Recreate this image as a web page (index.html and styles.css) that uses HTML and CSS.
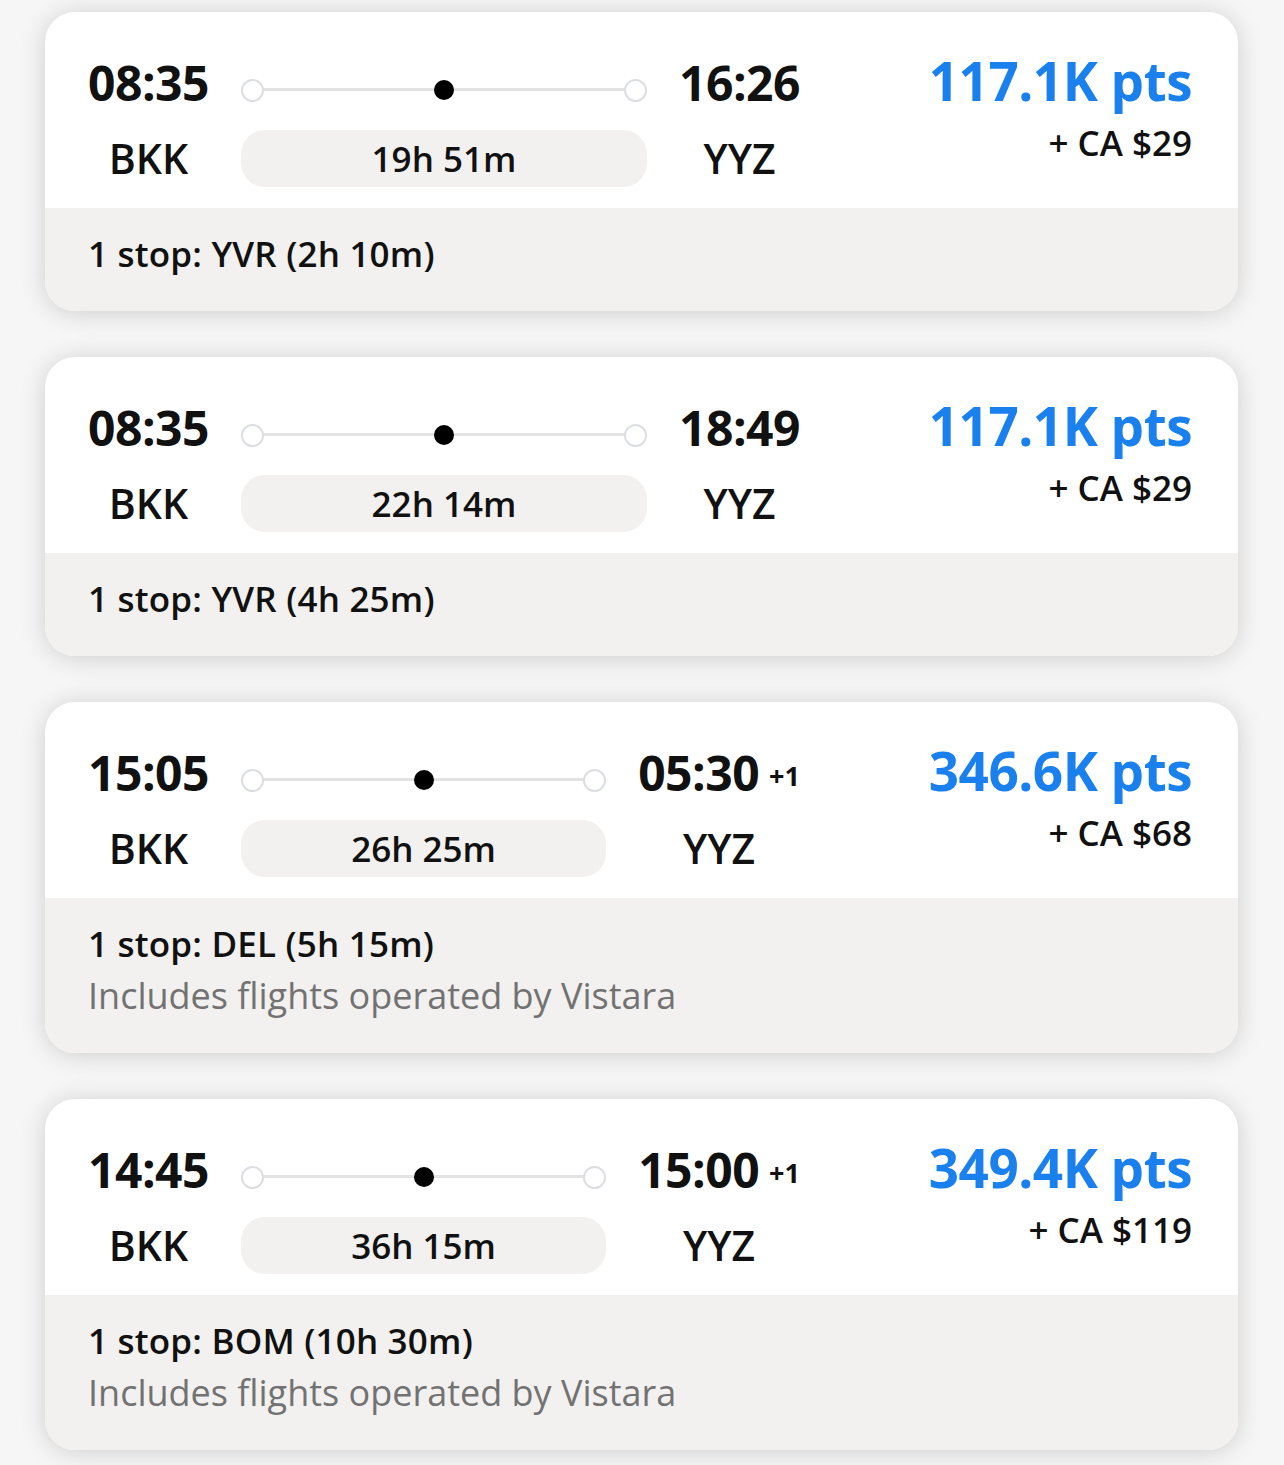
FILE: index.html
```html
<!DOCTYPE html>
<html lang="en">
<head>
    <meta charset="utf-8"/>
    <meta name="viewport" content="width=device-width, initial-scale=1.0">
    <title>Flight results</title>
    <link rel="stylesheet" href="styles.css">
</head>
<body>
    <div class="results">
        <div class="card">
            <div class="card-main">
                <div class="route">
                    <div class="time">08:35</div>
                    <div class="track"><span class="dot hollow"></span><span class="dot stop"></span><span class="dot hollow"></span></div>
                    <div class="time">16:26</div>
                    <div class="code">BKK</div>
                    <div class="duration">19h 51m</div>
                    <div class="code">YYZ</div>
                </div>
                <div class="price">
                    <div class="pts">117.1K pts</div>
                    <div class="fee">+ CA $29</div>
                </div>
            </div>
            <div class="card-foot">
                <div class="stops">1 stop: YVR (2h 10m)</div>
            </div>
        </div>

        <div class="card">
            <div class="card-main">
                <div class="route">
                    <div class="time">08:35</div>
                    <div class="track"><span class="dot hollow"></span><span class="dot stop"></span><span class="dot hollow"></span></div>
                    <div class="time">18:49</div>
                    <div class="code">BKK</div>
                    <div class="duration">22h 14m</div>
                    <div class="code">YYZ</div>
                </div>
                <div class="price">
                    <div class="pts">117.1K pts</div>
                    <div class="fee">+ CA $29</div>
                </div>
            </div>
            <div class="card-foot">
                <div class="stops">1 stop: YVR (4h 25m)</div>
            </div>
        </div>

        <div class="card">
            <div class="card-main">
                <div class="route">
                    <div class="time">15:05</div>
                    <div class="track"><span class="dot hollow"></span><span class="dot stop"></span><span class="dot hollow"></span></div>
                    <div class="time">05:30<span class="plus-day">+1</span></div>
                    <div class="code">BKK</div>
                    <div class="duration">26h 25m</div>
                    <div class="code">YYZ</div>
                </div>
                <div class="price">
                    <div class="pts">346.6K pts</div>
                    <div class="fee">+ CA $68</div>
                </div>
            </div>
            <div class="card-foot">
                <div class="stops">1 stop: DEL (5h 15m)</div>
                <div class="operator">Includes flights operated by Vistara</div>
            </div>
        </div>

        <div class="card">
            <div class="card-main">
                <div class="route">
                    <div class="time">14:45</div>
                    <div class="track"><span class="dot hollow"></span><span class="dot stop"></span><span class="dot hollow"></span></div>
                    <div class="time">15:00<span class="plus-day">+1</span></div>
                    <div class="code">BKK</div>
                    <div class="duration">36h 15m</div>
                    <div class="code">YYZ</div>
                </div>
                <div class="price">
                    <div class="pts">349.4K pts</div>
                    <div class="fee">+ CA $119</div>
                </div>
            </div>
            <div class="card-foot">
                <div class="stops">1 stop: BOM (10h 30m)</div>
                <div class="operator">Includes flights operated by Vistara</div>
            </div>
        </div>
    </div>
</body>
</html>
```

FILE: styles.css
```css
body {
    font-family: "Open Sans", "Noto Sans", sans-serif;
    margin: 0;
    padding: 0;
    background-color: #f6f6f6;
    color: #111;
}
.results {
    display: flex;
    flex-direction: column;
    gap: 46px;
    padding: 12px 46px 19px 45px;
}
.card {
    background: #fff;
    border-radius: 30px;
    overflow: hidden;
    box-shadow: 0 2px 26px rgba(0, 0, 0, 0.16);
}
.card-main {
    display: flex;
    align-items: flex-start;
    padding: 43px 46px 21px 43px;
}

/* departure | track | arrival, two rows so the codes line up under the times */
.route {
    flex: 1;
    display: grid;
    grid-template-columns: auto 1fr auto;
    grid-template-rows: 56px 57px;
    column-gap: 32px;
    row-gap: 19px;
}
.time {
    font-size: 48px;
    font-weight: 700;
    line-height: 56px;
    text-align: center;
    letter-spacing: -0.5px;
    white-space: nowrap;
}
.plus-day {
    font-size: 27px;
    font-weight: 700;
    margin-left: 10px;
    letter-spacing: 0;
    vertical-align: 5px;
}
.code {
    font-size: 41px;
    font-weight: 600;
    line-height: 57px;
    text-align: center;
}
.track {
    display: flex;
    align-items: center;
    justify-content: space-between;
    padding-top: 14px;
    position: relative;
}
.track::before {
    content: "";
    position: absolute;
    left: 10px;
    right: 10px;
    top: 50%;
    margin-top: 5px;
    height: 3px;
    background: #e3e3e3;
}
.dot {
    position: relative;
    width: 23px;
    height: 23px;
    border-radius: 50%;
    box-sizing: border-box;
}
.dot.hollow {
    background: #fff;
    border: 2px solid #dcdee1;
}
.dot.stop {
    width: 20px;
    height: 20px;
    background: #000;
}
.duration {
    background: #f2f1f0;
    border-radius: 24px;
    font-size: 35px;
    font-weight: 600;
    line-height: 57px;
    text-align: center;
}
.price {
    width: 392px;
    text-align: right;
}
.pts {
    color: #1a80ee;
    font-size: 53px;
    font-weight: 700;
    line-height: 52px;
    letter-spacing: -0.5px;
}
.fee {
    font-size: 35px;
    font-weight: 600;
    line-height: 46px;
    margin-top: 13px;
}
.card-foot {
    background: #f2f1ef;
    padding: 20px 44px 31px 43px;
    font-size: 35px;
    line-height: 52px;
}
.stops {
    font-weight: 600;
    letter-spacing: 0.2px;
}
.operator {
    color: #727272;
    font-size: 36px;
}
```
